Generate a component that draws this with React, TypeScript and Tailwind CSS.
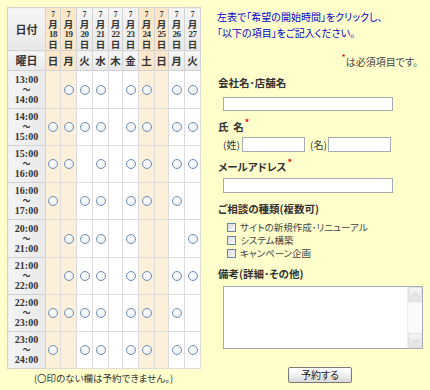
import React from "react";

const dates = [
  { d: "18", w: "日", hl: true, width: 15 },
  { d: "19", w: "月", hl: true, width: 16 },
  { d: "20", w: "火", hl: false, width: 16 },
  { d: "21", w: "水", hl: false, width: 16 },
  { d: "22", w: "木", hl: false, width: 14 },
  { d: "23", w: "金", hl: false, width: 16 },
  { d: "24", w: "土", hl: true, width: 16 },
  { d: "25", w: "日", hl: true, width: 14 },
  { d: "26", w: "月", hl: false, width: 16 },
  { d: "27", w: "火", hl: false, width: 16 },
];

const rows: { from: string; to: string; slots: number[]; h: number }[] = [
  { from: "13:00", to: "14:00", slots: [0, 1, 1, 1, 0, 1, 1, 0, 1, 1], h: 38 },
  { from: "14:00", to: "15:00", slots: [1, 1, 1, 1, 0, 1, 1, 0, 1, 1], h: 37 },
  { from: "15:00", to: "16:00", slots: [1, 1, 0, 1, 0, 1, 1, 0, 1, 1], h: 37 },
  { from: "16:00", to: "17:00", slots: [1, 0, 1, 1, 0, 1, 1, 0, 1, 0], h: 37 },
  { from: "20:00", to: "21:00", slots: [0, 1, 1, 1, 0, 1, 0, 0, 0, 1], h: 38 },
  { from: "21:00", to: "22:00", slots: [0, 1, 1, 1, 0, 1, 1, 0, 1, 1], h: 37 },
  { from: "22:00", to: "23:00", slots: [1, 1, 1, 1, 0, 1, 1, 0, 1, 0], h: 37 },
  { from: "23:00", to: "24:00", slots: [1, 0, 1, 1, 0, 1, 1, 0, 1, 1], h: 37 },
];

const jp = "font-['Noto_Sans_CJK_JP','Noto_Sans',sans-serif] [font-feature-settings:'palt']";
const serif = "font-['Liberation_Serif','Noto_Sans_CJK_JP',serif]";

function Radio() {
  return (
    <span className="inline-block w-[10px] h-[10px] rounded-full border border-[#6f8db3] bg-[radial-gradient(circle_at_40%_35%,#ffffff,#e3e9f1)]" />
  );
}

function Checkbox() {
  return (
    <span className="inline-block w-[9px] h-[9px] border border-[#6b87a8] bg-[linear-gradient(135deg,#dcdde6,#f7f7fa)]" />
  );
}

function Req() {
  return <span className="text-[#e00000] text-[9px] relative top-[-5px] ml-[1px]">*</span>;
}

function Input({ w, h }: { w: number; h: number }) {
  return (
    <div
      className="border border-[#a5acb2] bg-white"
      style={{ width: w, height: h }}
    />
  );
}

export default function App() {
  return (
    <div className={`w-[430px] h-[390px] bg-[#ffffcc] flex overflow-hidden ${jp} text-[#333]`}>
      {/* Left: schedule table */}
      <div className="pl-[7px] pt-[7px] w-[210px] flex flex-col">
        <table className="table-fixed border-collapse border border-[#b4b4b4] w-[193px]">
          <colgroup>
            <col style={{ width: 38 }} />
            {dates.map((d) => (
              <col key={d.d} style={{ width: d.width }} />
            ))}
          </colgroup>
          <tbody>
            <tr className="h-[43px]">
              <td className="border border-[#d2d2d2] bg-[linear-gradient(#f6f6f6,#e8e8e8)] text-center text-[11px] font-bold text-[#333]">
                日付
              </td>
              {dates.map((d) => (
                <td
                  key={d.d}
                  className={`border border-[#d2d2d2] p-0 text-center align-middle ${d.hl ? "bg-[#fbe8cb]" : "bg-[linear-gradient(#f6f6f6,#e8e8e8)]"}`}
                >
                  <div className="flex flex-col items-center text-[#333]">
                    <span className={`${serif} h-[9px] text-[7.5px] leading-[9px] font-bold`}>7</span>
                    <span className="h-[10px] text-[9.5px] leading-[10px] font-bold">月</span>
                    <span className={`${serif} h-[10px] text-[9px] leading-[10px] font-bold tracking-[-0.5px]`}>{d.d}</span>
                    <span className="h-[10px] text-[9.5px] leading-[10px] font-bold">日</span>
                  </div>
                </td>
              ))}
            </tr>
            <tr className="h-[20px]">
              <td className="border border-[#d2d2d2] bg-[linear-gradient(#f6f6f6,#e8e8e8)] text-center text-[11px] font-bold">
                曜日
              </td>
              {dates.map((d) => (
                <td
                  key={d.d}
                  className={`border border-[#d2d2d2] p-0 text-center text-[10.5px] font-bold ${d.hl ? "bg-[#fbe8cb]" : "bg-[linear-gradient(#f6f6f6,#e8e8e8)]"}`}
                >
                  {d.w}
                </td>
              ))}
            </tr>
            {rows.map((r) => (
              <tr key={r.from} style={{ height: r.h }}>
                <td className="border border-[#d2d2d2] bg-[linear-gradient(90deg,#f4f4f4,#e9e9e9)] p-0 text-center">
                  <div className={`flex flex-col items-center ${serif} font-bold text-[10px] leading-[10px] text-[#333]`}>
                    <span className="h-[10px]">{r.from}</span>
                    <span className="h-[10px] text-[8px] leading-[10px]">～</span>
                    <span className="h-[10px]">{r.to}</span>
                  </div>
                </td>
                {r.slots.map((s, i) => (
                  <td
                    key={i}
                    className={`border border-[#dcdcdc] p-0 text-center align-middle ${dates[i].hl ? "bg-[#fdf0da]" : "bg-white"}`}
                  >
                    {s ? (
                      <div className="flex justify-center items-center">
                        <Radio />
                      </div>
                    ) : null}
                  </td>
                ))}
              </tr>
            ))}
          </tbody>
        </table>
        <div className="w-[193px] text-center text-[9.5px] leading-[16px] mt-[1px] text-[#333]">
          (〇印のない欄は予約できません。)
        </div>
      </div>

      {/* Right: form */}
      <div className="flex-1 flex flex-col pt-[9px] pl-[7px] text-[10px]">
        <div className="text-[#0000cc] leading-[16px] text-[10px]">
          左表で「希望の開始時間」をクリックし、
        </div>
        <div className="text-[#0000cc] leading-[16px] text-[10px]">
          「以下の項目」をご記入ください。
        </div>
        <div className="mt-[13px] h-[16px] leading-[16px] text-right pr-[12px] text-[#444]">
          <Req />は必須項目です。
        </div>
        <div className="mt-[5px] h-[16px] leading-[16px] font-bold text-[10.5px] pl-[1px]">会社名･店舗名</div>
        <div className="mt-[6px] ml-[6px]">
          <Input w={170} h={14} />
        </div>
        <div className="mt-[8px] h-[16px] leading-[16px] font-bold text-[10.5px] pl-[1px]">
          氏&nbsp;&nbsp;名<Req />
        </div>
        <div className="mt-[2px] ml-[6px] flex items-center">
          <span className="w-[19px] text-[10px]">(姓)</span>
          <Input w={63} h={15} />
          <span className="ml-[5px] w-[18px] text-[10px]">(名)</span>
          <Input w={63} h={15} />
        </div>
        <div className="mt-[7px] h-[16px] leading-[16px] font-bold text-[10.5px] pl-[1px]">
          メールアドレス<Req />
        </div>
        <div className="mt-[3px] ml-[6px]">
          <Input w={170} h={15} />
        </div>
        <div className="mt-[8px] h-[16px] leading-[16px] font-bold text-[10.5px] pl-[1px]">
          ご相談の種類(複数可)
        </div>
        <div className="mt-[4px] ml-[10px] flex flex-col">
          {["サイトの新規作成･リニューアル", "システム構築", "キャンペーン企画"].map((t) => (
            <div key={t} className="h-[13px] flex items-center gap-[4px] text-[9.5px] text-[#444]">
              <Checkbox />
              <span className="leading-[13px]">{t}</span>
            </div>
          ))}
        </div>
        <div className="mt-[6px] h-[16px] leading-[16px] font-bold text-[10.5px] pl-[1px]">
          備考(詳細･その他)
        </div>
        <div className="mt-[4px] ml-[6px] w-[200px] h-[63px] border border-[#a5acb2] bg-white flex">
          <textarea className="flex-1 resize-none outline-none bg-white text-[10px]" />
          <div className="w-[15px] flex flex-col justify-between bg-[#fafafa] border-l border-[#eeeeee]">
            <div className="h-[15px] bg-[linear-gradient(#f4f4f4,#e4e4e4)] border border-[#e0e0e0] flex items-center justify-center">
              <svg width="7" height="4" viewBox="0 0 7 4">
                <path d="M0.5 3.5 L3.5 0.5 L6.5 3.5" fill="none" stroke="#c6c6c6" strokeWidth="1" />
              </svg>
            </div>
            <div className="h-[15px] bg-[linear-gradient(#f4f4f4,#e4e4e4)] border border-[#e0e0e0] flex items-center justify-center">
              <svg width="7" height="4" viewBox="0 0 7 4">
                <path d="M0.5 0.5 L3.5 3.5 L6.5 0.5" fill="none" stroke="#c6c6c6" strokeWidth="1" />
              </svg>
            </div>
          </div>
        </div>
        <div className="mt-[18px] ml-[71px]">
          <button className="w-[64px] h-[16px] border border-[#7a7a7a] rounded-[2px] bg-[linear-gradient(#ffffff,#ececec_60%,#d8d8d8)] text-[10px] leading-[14px] text-[#222]">
            予約する
          </button>
        </div>
      </div>
    </div>
  );
}
